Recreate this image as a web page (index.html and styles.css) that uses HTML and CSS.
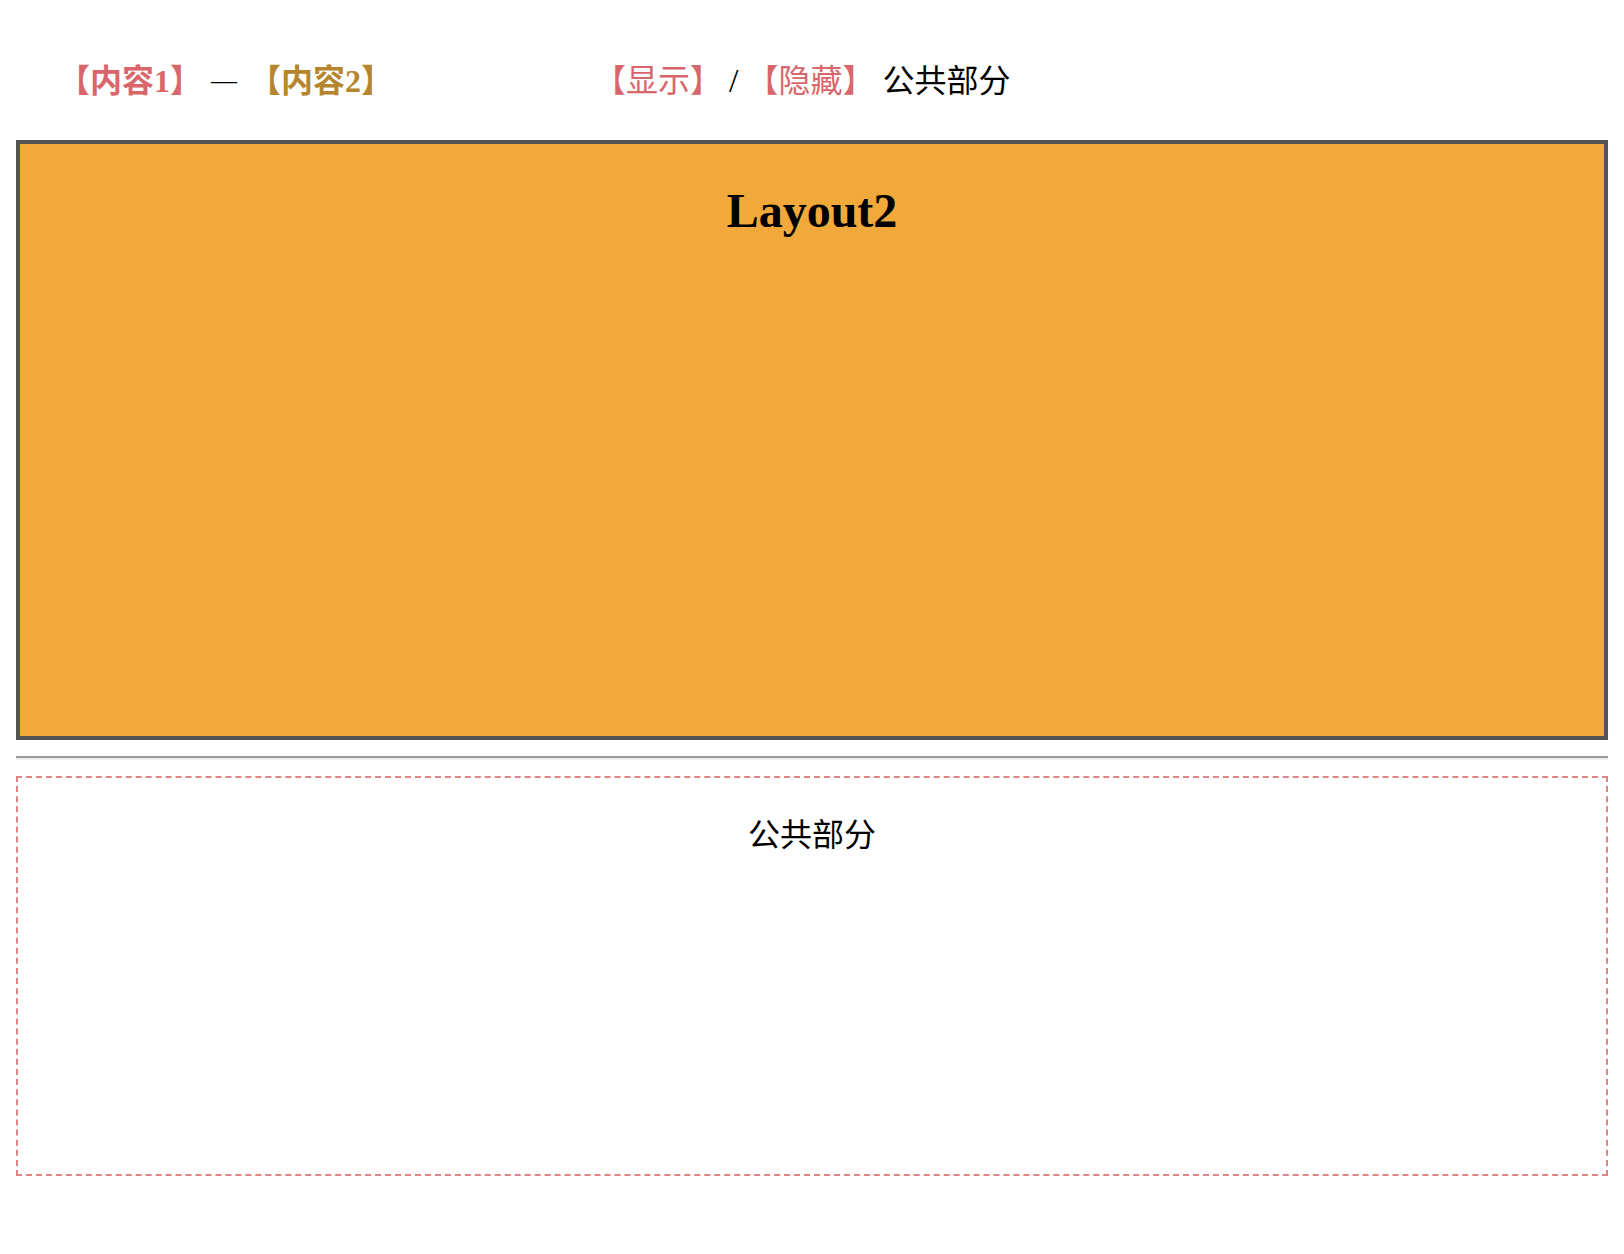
FILE: index.html
```html
<!DOCTYPE html>
<html lang="zh">
<head>
<meta charset="utf-8">
<title>Layout2</title>
<link rel="stylesheet" href="styles.css">
</head>
<body>
<div class="page">
  <div class="nav">
    <div class="group group-tabs">
      <span class="tab tab-active">【内容1】</span>
      <span class="sep dash">—</span>
      <span class="tab tab-gold">【内容2】</span>
    </div>
    <div class="group group-toggle">
      <span class="tab tab-plain">【显示】</span>
      <span class="sep slash">/</span>
      <span class="tab tab-plain">【隐藏】</span>
      <span class="label">公共部分</span>
    </div>
  </div>
  <div class="layout-box">
    <h1 class="layout-title">Layout2</h1>
  </div>
  <hr class="divider">
  <div class="common-box">
    <p class="common-text">公共部分</p>
  </div>
</div>
</body>
</html>
```
FILE: styles.css
```css
html, body {
  margin: 0;
  padding: 0;
  background: #ffffff;
}
body {
  font-family: "Liberation Serif", "Noto Sans CJK SC", serif;
  color: #000;
}
.page {
  padding: 0 16px;
}
.nav {
  display: flex;
  align-items: center;
  height: 40px;
  margin-top: 61px;
  font-size: 32px;
  line-height: 40px;
}
.group {
  display: flex;
  align-items: center;
}
.group-tabs {
  margin-left: 42px;
  width: 536px;
}
.tab-active {
  color: #d9666b;
  font-weight: bold;
}
.tab-gold {
  color: #b5862e;
  font-weight: bold;
}
.tab-plain {
  color: #d9666b;
}
.sep {
  color: #000;
}
.dash {
  font-size: 26px;
  margin: 0 12px 0 9px;
}
.slash {
  font-size: 34px;
  margin: 0 8px 0 7px;
}
.label {
  margin-left: 8px;
}
.layout-box {
  margin-top: 39px;
  height: 592px;
  border: 4px solid #555555;
  background: #f2a93b;
}
.layout-title {
  margin: 39px 0 0;
  text-align: center;
  font-size: 48px;
  font-weight: bold;
  line-height: 55px;
}
.divider {
  margin: 16px 0 16px;
  height: 0;
  border: 0;
  border-top: 2px solid #9b9b9b;
  border-bottom: 2px solid #eeeeee;
}
.common-box {
  height: 396px;
  border: 2px dashed #e08585;
}
.common-text {
  margin: 37px 0 0;
  text-align: center;
  font-size: 32px;
  line-height: 40px;
}
```
